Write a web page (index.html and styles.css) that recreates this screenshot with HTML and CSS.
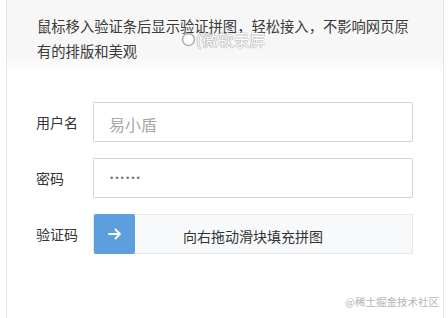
FILE: index.html
```html
<!DOCTYPE html>
<html lang="zh">
<head>
<meta charset="utf-8">
<link rel="stylesheet" href="styles.css">
</head>
<body>
<div class="card">
  <div class="intro">
    <p>鼠标移入验证条后显示验证拼图，轻松接入，不影响网页原有的排版和美观</p>
  </div>
  <form class="form">
    <div class="row">
      <label class="label">用户名</label>
      <input class="field" type="text" placeholder="易小盾">
    </div>
    <div class="row">
      <label class="label">密码</label>
      <input class="field pwd" type="password" value="123456">
    </div>
    <div class="row">
      <label class="label">验证码</label>
      <div class="slider">
        <div class="knob">
          <svg width="14" height="12" viewBox="0 0 14 12"><path d="M1 6H12M7.5 1.5L12 6L7.5 10.5" fill="none" stroke="#fff" stroke-width="1.8" stroke-linecap="round" stroke-linejoin="round"/></svg>
        </div>
        <span class="tip">向右拖动滑块填充拼图</span>
      </div>
    </div>
  </form>
  <div class="mark">
    <svg width="15" height="16" viewBox="0 0 15 16"><circle cx="7.5" cy="8.5" r="6" fill="#fff" stroke="#b0b0b0" stroke-width="1.6"/></svg>
    <span>(微软录屏</span>
  </div>
  <div class="credit">@稀土掘金技术社区</div>
</div>
</body>
</html>
```
FILE: styles.css
```css
html, body {
  margin: 0;
  padding: 0;
  background: #fff;
}
body {
  font-family: "Noto Sans CJK SC", "Liberation Sans", sans-serif;
  color: #333;
}
.card {
  position: relative;
  margin-left: 6px;
  width: 436px;
  height: 318px;
  border-left: 1px solid #e6e6e6;
  border-right: 1px solid #e6e6e6;
}
.intro {
  background: linear-gradient(#f7f7f7 0, #f7f7f7 58px, #fbfbfb 66px, #fff 72px);
  height: 70px;
  padding: 14px 26px 0 30px;
  box-sizing: border-box;
}
.intro p {
  margin: 0;
  font-size: 14.3px;
  line-height: 24.5px;
  color: #3a3a3a;
}
.form {
  display: flex;
  flex-direction: column;
  gap: 16px;
  padding-top: 32px;
}
.row {
  display: flex;
  align-items: center;
}
.label {
  width: 57px;
  padding-left: 29px;
  font-size: 14px;
  color: #333;
}
.field {
  width: 320px;
  height: 40px;
  box-sizing: border-box;
  margin: 0;
  border: 1px solid #d4d4d4;
  border-radius: 1px;
  padding: 3px 15px 0;
  font-family: "Noto Sans CJK SC", sans-serif;
  font-size: 16px;
  color: #666;
  outline: none;
}
.field::placeholder {
  color: #a8a8a8;
}
.pwd {
  font-family: "DejaVu Sans", sans-serif;
  font-size: 9px;
  letter-spacing: 0;
  color: #7a7a7a;
  padding-top: 0;
}
.slider {
  position: relative;
  width: 320px;
  height: 40px;
  box-sizing: border-box;
  border: 1px solid #e4e7eb;
  background: #f7f9fa;
  display: flex;
  align-items: center;
}
.knob {
  position: absolute;
  left: 0;
  top: -1px;
  width: 41px;
  height: 40px;
  background: #5d9fdd;
  border-radius: 2px;
  display: flex;
  align-items: center;
  justify-content: center;
}
.tip {
  flex: 1;
  text-align: center;
  font-size: 14px;
  color: #333;
  padding-top: 3px;
}
.mark {
  position: absolute;
  left: 174px;
  top: 30px;
  display: flex;
  align-items: center;
  font-size: 16px;
  line-height: 18px;
  color: #fff;
  text-shadow: 0 0 1px #a0a0a0, 0 0 1px #a0a0a0, 0 0 1px #a0a0a0;
}
.credit {
  position: absolute;
  right: 4px;
  bottom: 9px;
  font-size: 10.5px;
  color: #b4b4b4;
}
```
